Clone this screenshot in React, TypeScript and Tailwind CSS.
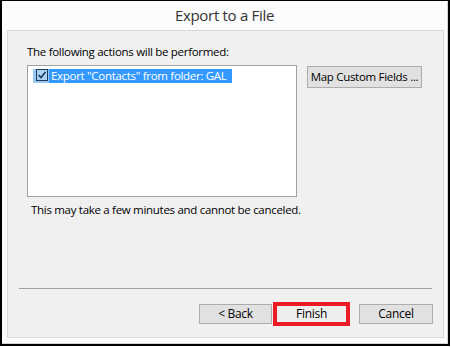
import React from "react"

const font = { fontFamily: '"Open Sans", "Noto Sans", sans-serif' }

function Btn({ label, className = "" }: { label: string; className?: string }) {
  return (
    <div
      className={`w-[73px] h-[20px] border border-[#adadad] bg-[#e1e1e1] flex items-center justify-center text-[12px] tracking-[-0.3px] text-black ${className}`}
    >
      {label}
    </div>
  )
}

export default function App() {
  return (
    <div className="w-[451px] h-[347px] bg-white" style={font}>
      <div className="w-[450px] h-[346px] border-black border-t border-l-2 border-r-2 border-b-2 flex flex-col">
        <div className="flex-1 flex flex-col bg-[#fcfcfc] border-r border-b border-[#d4d4d4]">
          <div className="h-[29px] flex items-center justify-center text-[15px] tracking-[-0.3px] text-[#333333]">
            Export to a File
          </div>

          <div className="ml-[5px] w-[437px] h-[308px] bg-[#f0f0f0] border border-[#d9d9d9] flex flex-col pb-[11px] text-[11.5px] tracking-[-0.3px]">
            <div className="pl-[19px] mt-[13px] leading-[16px] text-black">
              The following actions will be performed:
            </div>

            <div className="flex items-start pl-[19px] mt-[5px]">
              <div className="w-[270px] h-[132px] border border-[#a0a0a0] bg-white pl-[5px] pt-[3px]">
                <div className="flex h-[14px]">
                  <div className="w-[16px] h-[14px] bg-[#99c9f2] pl-[3px]">
                    <div className="w-[12px] h-[12px] border border-[#1f3b57] bg-[#a8d1f5] flex items-center justify-center">
                      <svg width="10" height="10" viewBox="0 0 10 10">
                        <path d="M1.5 5 L4 7.5 L8.5 2" fill="none" stroke="#1f3b57" strokeWidth="1.6" />
                      </svg>
                    </div>
                  </div>
                  <div className="h-[14px] bg-[#3399ff] text-white leading-[14px] pl-[2px] pr-[5px] whitespace-nowrap">
                    Export "Contacts" from folder: GAL
                  </div>
                </div>
              </div>
              <div className="ml-[10px] mt-[1px] w-[115px] h-[22px] border border-[#adadad] bg-[#e1e1e1] flex items-center justify-center text-black whitespace-nowrap">
                Map Custom Fields ...
              </div>
            </div>

            <div className="pl-[23px] mt-[5px] leading-[16px] text-black">
              This may take a few minutes and cannot be canceled.
            </div>

            <div className="mt-auto ml-[11px] w-[413px] h-px bg-[#a0a0a0]" />

            <div className="mt-[13px] flex items-center justify-end pr-[10px]">
              <Btn label="< Back" />
              <div className="ml-[1px] w-[77px] h-[24px] border-[4px] border-[#ed1c24] bg-[#eeeeee] flex items-center justify-center text-[12px] text-black">
                Finish
              </div>
              <Btn label="Cancel" className="ml-[9px] w-[74px]" />
            </div>
          </div>
        </div>
      </div>
    </div>
  )
}
